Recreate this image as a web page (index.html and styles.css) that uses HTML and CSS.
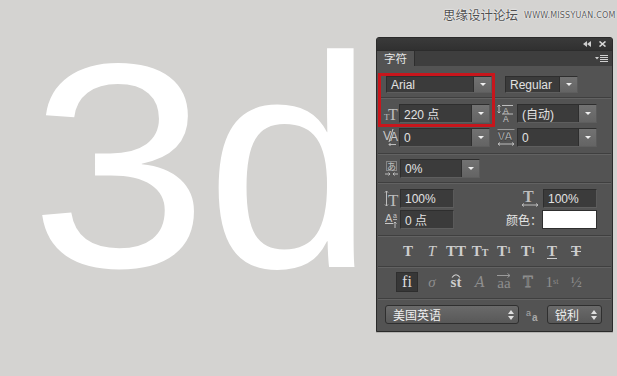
FILE: index.html
```html
<!DOCTYPE html>
<html lang="zh-CN">
<head>
<meta charset="utf-8">
<title>字符</title>
<link rel="stylesheet" href="styles.css">
</head>
<body>
<div class="stage">
  <div class="canvas"><span class="big"><span class="three">3</span><span class="dee">d</span></span></div>

  <div class="panel">
    <div class="titlebar">
      <svg class="tb-icon" width="8" height="6" viewBox="0 0 8 6"><path d="M4 0 L0 3 L4 6 Z M8 0 L4 3 L8 6 Z" fill="#cfcfcf"/></svg>
      <svg class="tb-icon" width="7" height="6" viewBox="0 0 7 6"><path d="M0.5 0.5 L6.5 5.5 M6.5 0.5 L0.5 5.5" stroke="#d8d8d8" stroke-width="1.6"/></svg>
    </div>
    <div class="tabrow">
      <div class="tab">字符</div>
      <svg class="menu" width="13" height="8" viewBox="0 0 13 8"><path d="M0 2 L4 2 L2 4.5 Z" fill="#d0d0d0"/><path d="M5 0.5 H13 M5 2.5 H13 M5 4.5 H13 M5 6.5 H13" stroke="#d0d0d0" stroke-width="1"/></svg>
    </div>

    <div class="content">
      <div class="row row-font">
        <div class="drop w-font"><span class="val">Arial</span><span class="btn"><i class="tri"></i></span></div>
        <div class="drop w-style"><span class="val">Regular</span><span class="btn"><i class="tri"></i></span></div>
      </div>
      <div class="sep sep-a"></div>

      <div class="row row-mt5">
        <svg class="ico ico-l" width="14" height="19" viewBox="0 0 14 19" overflow="visible"><text x="-1" y="16" font-family="Liberation Serif" font-size="9" fill="#bdbdbd">T</text><text x="3" y="16" font-family="Liberation Serif" font-size="16" fill="#bdbdbd">T</text></svg>
        <div class="drop w-size"><span class="val">220 点</span><span class="btn"><i class="tri"></i></span></div>
        <svg class="ico ico-r" width="18" height="19" viewBox="0 0 18 19" overflow="visible"><path d="M2 1 L2 9 M0.5 2.5 L2 1 L3.5 2.5 M0.5 7.5 L2 9 L3.5 7.5" stroke="#bdbdbd" stroke-width="1" fill="none"/><path d="M5 1.5 H16 M5 10 H16" stroke="#bdbdbd" stroke-width="1"/><text x="6" y="9.5" font-family="Liberation Sans" font-size="8.5" fill="#c8c8c8">A</text><text x="6" y="18" font-family="Liberation Sans" font-size="8.5" fill="#c8c8c8">A</text></svg>
        <div class="drop w-lead"><span class="val">(自动)</span><span class="btn"><i class="tri"></i></span></div>
      </div>

      <div class="row row-mt5">
        <svg class="ico ico-l" width="14" height="19" viewBox="0 0 14 19" overflow="visible"><text x="-2" y="12" font-family="Liberation Sans" font-size="12" fill="#c8c8c8">V</text><text x="5" y="13" font-family="Liberation Sans" font-size="12" fill="#c8c8c8">A</text><path d="M4 14 L8 1" stroke="#c8c8c8" stroke-width="1"/><path d="M4 16.5 H11 M5.5 15 L4 16.5 L5.5 18" stroke="#bdbdbd" stroke-width="1" fill="none"/></svg>
        <div class="drop w-size"><span class="val">0</span><span class="btn"><i class="tri"></i></span></div>
        <svg class="ico ico-r" width="18" height="19" viewBox="0 0 18 19" overflow="visible"><path d="M0.5 1.5 H17.5" stroke="#9a9a9a" stroke-width="1"/><text x="0.5" y="12" font-family="Liberation Sans" font-weight="bold" font-size="11.5" fill="#b4b4b4" stroke="#222" stroke-width="0.4">VA</text><path d="M1 16 H17 M3 14.5 L1 16 L3 17.5 M15 14.5 L17 16 L15 17.5" stroke="#bdbdbd" stroke-width="1" fill="none"/></svg>
        <div class="drop w-lead"><span class="val">0</span><span class="btn"><i class="tri"></i></span></div>
      </div>
      <div class="sep sep-b"></div>

      <div class="row row-mt4">
        <svg class="ico ico-l" width="14" height="19" viewBox="0 0 14 19" overflow="visible"><rect x="1.5" y="2.5" width="10" height="9" fill="none" stroke="#bdbdbd" stroke-width="1" stroke-dasharray="1 1"/><text x="2" y="11" font-family="Noto Sans CJK JP" font-size="9" fill="#c8c8c8">あ</text><path d="M0 15 H5 M3.5 13.5 L5 15 L3.5 16.5 M13 15 H8 M9.5 13.5 L8 15 L9.5 16.5" stroke="#bdbdbd" stroke-width="1" fill="none"/></svg>
        <div class="drop w-tsume"><span class="val">0%</span><span class="btn"><i class="tri"></i></span></div>
      </div>
      <div class="sep sep-c"></div>

      <div class="row row-mt5">
        <svg class="ico ico-l" width="14" height="19" viewBox="0 0 14 19" overflow="visible"><path d="M1.5 2 V17 M0 3.5 L1.5 2 L3 3.5 M0 15.5 L1.5 17 L3 15.5" stroke="#bdbdbd" stroke-width="1" fill="none"/><text x="3" y="17" font-family="Liberation Serif" font-size="17" fill="#bdbdbd">T</text></svg>
        <div class="field w-scale"><span class="val">100%</span></div>
        <svg class="ico ico-hs" width="18" height="19" viewBox="0 0 18 19" overflow="visible"><text x="2" y="13" font-family="Liberation Serif" font-weight="bold" font-size="16" fill="#bdbdbd">T</text><path d="M1 16 H17 M3 14.5 L1 16 L3 17.5 M15 14.5 L17 16 L15 17.5" stroke="#bdbdbd" stroke-width="1" fill="none"/></svg>
        <div class="field w-scale"><span class="val">100%</span></div>
      </div>

      <div class="row row-mt2">
        <svg class="ico ico-l" width="14" height="19" viewBox="0 0 14 19" overflow="visible"><text x="0" y="12" font-family="Liberation Sans" font-size="11" fill="#c8c8c8">A</text><path d="M0 13.5 H8" stroke="#c8c8c8" stroke-width="1"/><text x="8" y="8" font-family="Liberation Sans" font-size="7" fill="#c8c8c8">a</text><path d="M8 9.5 H12" stroke="#c8c8c8" stroke-width="0.8"/><path d="M10 18 V12 M8.5 13.5 L10 12 L11.5 13.5" stroke="#bdbdbd" stroke-width="1" fill="none"/></svg>
        <div class="field w-scale"><span class="val">0 点</span></div>
        <span class="color-label">颜色：</span>
        <div class="swatch"></div>
      </div>
      <div class="sep sep-d"></div>

      <div class="glyphs glyph-row1">
        <span class="g g-b">T</span>
        <span class="g g-i">T</span>
        <span class="g g-b">TT</span>
        <span class="g g-b">T<small>T</small></span>
        <span class="g g-b">T<sup>1</sup></span>
        <span class="g g-b">T<sub>1</sub></span>
        <span class="g g-b g-u">T</span>
        <span class="g g-b g-s">T</span>
      </div>
      <div class="sep sep-e"></div>

      <div class="glyphs glyph-row2">
        <span class="g g-sel">fi</span>
        <span class="g g-i g-dim">σ</span>
        <span class="g g-st">st<svg class="arc" width="10" height="5" viewBox="0 0 10 5"><path d="M1 4.5 Q5 -1 9 4.5" stroke="#cfcfcf" stroke-width="1.1" fill="none"/></svg></span>
        <span class="g g-i g-dim g-sw">A</span>
        <span class="g g-dim g-aa">aa<svg class="arr" width="14" height="5" viewBox="0 0 14 5"><path d="M0 2.5 H13 M10.5 0.5 L13 2.5 L10.5 4.5" stroke="#9a9a9a" stroke-width="1" fill="none"/></svg></span>
        <span class="g g-dim g-out">T</span>
        <span class="g g-dim">1<sup>st</sup></span>
        <span class="g g-dim">½</span>
      </div>
      <div class="sep sep-f"></div>

      <div class="row row-mt5 row-bottom">
        <div class="pop w-lang"><span class="val">美国英语</span><svg class="updn" width="6" height="10" viewBox="0 0 6 10"><path d="M3 0 L6 4 H0 Z M0 6 H6 L3 10 Z" fill="#e0e0e0"/></svg></div>
        <svg class="ico ico-aa" width="14" height="14" viewBox="0 0 14 14" overflow="visible"><text x="0" y="8" font-family="Liberation Sans" font-size="9" fill="#a8a8a8">a</text><text x="6" y="13" font-family="Liberation Sans" font-weight="bold" font-size="10" fill="#a8a8a8">a</text></svg>
        <div class="pop w-aa"><span class="val">锐利</span><svg class="updn" width="6" height="10" viewBox="0 0 6 10"><path d="M3 0 L6 4 H0 Z M0 6 H6 L3 10 Z" fill="#e0e0e0"/></svg></div>
      </div>
    </div>

    <div class="highlight"></div>
  </div>

  <div class="watermark"><span class="wm-cn">思缘设计论坛</span><span class="wm-en">WWW.MISSYUAN.COM</span></div>
</div>
</body>
</html>
```

FILE: styles.css
```css
* { box-sizing: border-box; }
html, body { margin: 0; padding: 0; }
body {
  width: 617px;
  height: 376px;
  overflow: hidden;
  background: #d4d3d1;
  font-family: "Liberation Sans", "Noto Sans CJK SC", sans-serif;
}
.stage {
  position: relative;
  display: flex;
  height: 376px;
}
.canvas {
  width: 376px;
  flex: none;
  overflow: visible;
}
.big {
  display: flex;
  align-items: baseline;
  padding: 12px 0 0 30px;
  font-family: "Liberation Sans", Arial, sans-serif;
  font-size: 302px;
  line-height: 302px;
  color: #ffffff;
  white-space: nowrap;
}
.three {
  display: inline-block;
  transform: scale(1.06, 0.965);
  transform-origin: 0 80%;
}
.dee {
  display: inline-block;
  margin-left: 8px;
}

/* panel */
.panel {
  position: relative;
  margin-top: 37px;
  width: 237px;
  height: 295px;
  flex: none;
  background: #535353;
  border: 1px solid #2a2a2a;
  border-radius: 3px 3px 0 0;
  display: flex;
  flex-direction: column;
  box-shadow: 0 1px 0 rgba(0,0,0,0.15);
}
.titlebar {
  height: 12px;
  background: linear-gradient(#3a3a3a, #303030);
  display: flex;
  justify-content: flex-end;
  align-items: center;
  gap: 8px;
  padding-right: 6px;
  border-radius: 2px 2px 0 0;
}
.tb-icon { display: block; }
.tabrow {
  height: 16px;
  background: #3e3e3e;
  border-top: 1px solid #2c2c2c;
  display: flex;
  align-items: stretch;
}
.tab {
  width: 38px;
  background: #535353;
  color: #e6e6e6;
  font-family: "Noto Sans CJK SC", sans-serif;
  font-size: 11.5px;
  line-height: 15px;
  padding-left: 7px;
  border-right: 1px solid #2e2e2e;
}
.menu {
  margin-left: auto;
  margin-right: 4px;
  align-self: center;
}

.content {
  display: flex;
  flex-direction: column;
  padding-top: 10px;
}
.row {
  display: flex;
  align-items: center;
  height: 19px;
  padding-left: 9px;
}
.row-font { height: 17px; }
.row-mt5 { margin-top: 5px; }
.row-mt4 { margin-top: 4px; }
.row-mt2 { margin-top: 2px; }

.sep {
  height: 2px;
  margin: 0 1px;
  border-top: 1px solid #3f3f3f;
  border-bottom: 1px solid #626262;
}
.sep-a { margin-top: 4px; }
.sep-b { margin-top: 6px; }
.sep-c { margin-top: 4px; }
.sep-d { margin-top: 6px; }
.sep-e { margin-top: 5px; }
.sep-f { margin-top: 6px; }

/* fields */
.drop, .field {
  height: 100%;
  display: flex;
  align-items: stretch;
  background: #3b3b3b;
  border: 1px solid #2e2e2e;
  border-bottom-color: #5e5e5e;
  border-right-color: #5a5a5a;
  color: #e2e2e2;
  font-size: 12px;
  flex: none;
}
.val {
  flex: 1;
  display: flex;
  align-items: center;
  padding-left: 4px;
  white-space: nowrap;
}
.btn {
  width: 18px;
  background: linear-gradient(#727272, #646464);
  border-left: 1px solid #2e2e2e;
  display: flex;
  align-items: center;
  justify-content: center;
}
.tri {
  width: 0;
  height: 0;
  border-left: 3px solid transparent;
  border-right: 3px solid transparent;
  border-top: 3px solid #f0f0f0;
}
.w-font { width: 106px; }
.w-style { width: 73px; margin-left: 13px; }
.w-size { width: 91px; }
.w-lead { width: 80px; }
.w-tsume { width: 80px; margin-left: 1px; }
.w-scale { width: 54px; margin-left: 1px; }

.ico { display: block; flex: none; overflow: visible; }
.ico-l { width: 14px; margin-left: -1px; }
.ico-r { margin-left: 7px; margin-right: 2px; }
.ico-hs { margin-left: 67px; margin-right: 3px; }

.color-label {
  margin-left: 52px;
  width: 36px;
  color: #e6e6e6;
  font-family: "Noto Sans CJK SC", sans-serif;
  font-size: 12px;
  line-height: 19px;
}
.swatch {
  width: 55px;
  height: 19px;
  background: #ffffff;
  border: 1px solid #2e2e2e;
}

/* glyph buttons */
.glyphs {
  display: flex;
  padding-left: 19px;
  height: 20px;
  align-items: center;
}
.glyph-row1 { margin-top: 4px; }
.glyph-row2 { margin-top: 4px; }
.g {
  position: relative;
  width: 24px;
  height: 20px;
  display: flex;
  align-items: center;
  justify-content: center;
  font-family: "Liberation Serif", serif;
  font-size: 15px;
  color: #cdcdcd;
  white-space: nowrap;
}
.g-b { font-weight: bold; }
.g-i { font-style: italic; }
.g small { font-size: 10px; margin-top: 3px; }
.g sup { font-size: 8px; vertical-align: 6px; line-height: 0; }
.g sub { font-size: 8px; vertical-align: -3px; line-height: 0; }
.g-u { text-decoration: underline; text-underline-offset: 2px; }
.g-s { text-decoration: line-through; }
.g-dim { color: #8e8e8e; }
.g-sw { font-family: "DejaVu Serif", serif; font-size: 14px; }
.g-sel {
  width: 22px;
  margin-right: 2px;
  background: #373737;
  border: 1px solid #2e2e2e;
  color: #dcdcdc;
  font-size: 16px;
}
.g-st { font-weight: bold; font-size: 15px; }
.g-st .arc { position: absolute; left: 7px; top: 1px; }
.g-aa .arr { position: absolute; left: 5px; top: 1px; }
.g-aa { padding-top: 3px; }
.g-out { color: transparent; -webkit-text-stroke: 0.8px #8e8e8e; font-size: 16px; }

/* bottom popups */
.row-bottom { padding-left: 8px; }
.pop {
  height: 19px;
  display: flex;
  align-items: center;
  justify-content: space-between;
  background: linear-gradient(#6a6a6a, #585858);
  border: 1px solid #2f2f2f;
  border-radius: 3px;
  color: #f0f0f0;
  font-family: "Noto Sans CJK SC", sans-serif;
  font-size: 12px;
  padding: 0 4px 0 7px;
  flex: none;
}
.pop .val { padding-left: 0; }
.w-lang { width: 134px; }
.w-aa { width: 55px; }
.ico-aa { margin: 0 7px 0 7px; }

/* red annotation frame */
.highlight {
  position: absolute;
  left: 1px;
  top: 35px;
  width: 117px;
  height: 54px;
  border: 3px solid #c8161c;
}

/* watermark */
.watermark {
  position: absolute;
  left: 443px;
  top: 7px;
  display: flex;
  align-items: center;
  gap: 6px;
  color: #4e4e4e;
  text-shadow: 0 0 2px #fff, 0 0 1px #fff;
}
.wm-cn {
  font-family: "Noto Sans CJK SC", sans-serif;
  font-size: 12.5px;
  line-height: 16px;
}
.wm-en {
  font-family: "DejaVu Sans", sans-serif;
  font-size: 8px;
  letter-spacing: 0.2px;
  color: #5a5a5a;
}
```
